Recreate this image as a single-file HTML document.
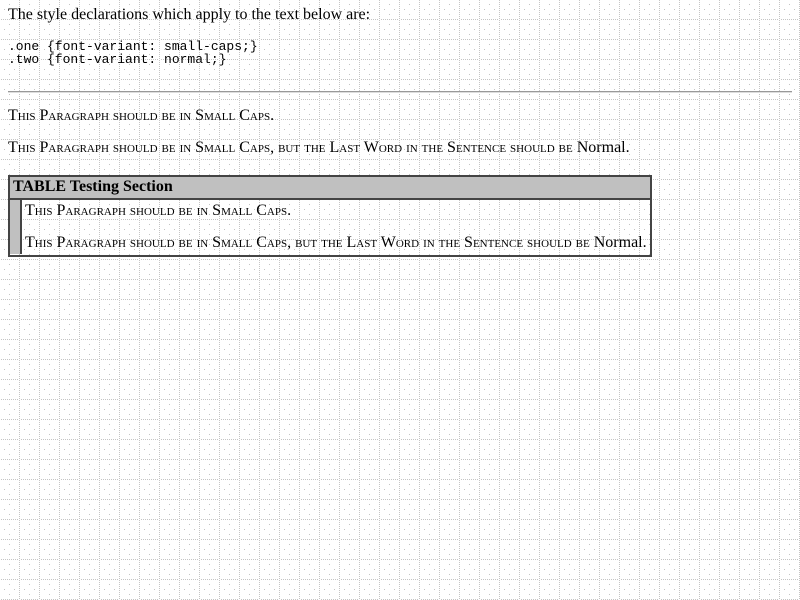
<!DOCTYPE html>
<html><head><style>
html,body{margin:0;padding:0;width:800px;height:600px;overflow:hidden;background:#fff;}
#bg{position:absolute;left:0;top:0;}
.t{position:absolute;font-family:"Liberation Serif",serif;font-size:16px;color:#000;white-space:nowrap;line-height:16px;}
.sc{font-variant:small-caps;}
pre{position:absolute;margin:0;font-family:"Liberation Mono",monospace;font-size:13px;line-height:13px;left:8px;top:40px;}
</style></head><body>
<svg id="bg" width="800" height="600">
<defs><pattern id="p" width="20" height="20" patternUnits="userSpaceOnUse">
<g fill="#c4c4c4">
<rect x="19" y="0" width="1" height="1"/><rect x="19" y="2" width="1" height="1"/><rect x="19" y="4" width="1" height="1"/><rect x="19" y="6" width="1" height="1"/><rect x="19" y="8" width="1" height="1"/><rect x="19" y="10" width="1" height="1"/><rect x="19" y="12" width="1" height="1"/><rect x="19" y="14" width="1" height="1"/><rect x="19" y="16" width="1" height="1"/><rect x="19" y="18" width="1" height="1"/>
<rect y="19" x="1" width="1" height="1"/><rect y="19" x="3" width="1" height="1"/><rect y="19" x="5" width="1" height="1"/><rect y="19" x="7" width="1" height="1"/><rect y="19" x="9" width="1" height="1"/><rect y="19" x="11" width="1" height="1"/><rect y="19" x="13" width="1" height="1"/><rect y="19" x="15" width="1" height="1"/><rect y="19" x="17" width="1" height="1"/>
<rect x="9" y="4" width="1" height="1"/><rect x="9" y="14" width="1" height="1"/><rect x="4" y="9" width="1" height="1"/><rect x="14" y="9" width="1" height="1"/>
</g></pattern></defs>
<rect width="800" height="600" fill="url(#p)"/>
</svg>
<div class="t" style="left:8px;top:7px">The style declarations which apply to the text below are:</div>
<pre>.one {font-variant: small-caps;}
.two {font-variant: normal;}</pre>
<div style="position:absolute;left:8px;top:91px;width:784px;height:1px;background:#999;border-bottom:1px solid #ddd"></div>
<div class="t sc" style="left:8px;top:108px">This Paragraph should be in Small Caps.</div>
<div class="t sc" style="left:8px;top:140px">This Paragraph should be in Small Caps, but the Last Word in the Sentence should be <span style="font-variant:normal">Normal</span>.</div>
<div style="position:absolute;left:8px;top:175px;width:640px;height:78px;border:2px solid #444;"></div>
<div style="position:absolute;left:10px;top:177px;width:640px;height:21px;background:#c0c0c0;border-bottom:2px solid #444"></div>
<div style="position:absolute;left:10px;top:200px;width:10px;height:54px;background:#c0c0c0;border-right:2px solid #444"></div>
<div class="t" style="left:13px;top:179px;font-weight:bold">TABLE Testing Section</div>
<div class="t sc" style="left:25px;top:203px">This Paragraph should be in Small Caps.</div>
<div class="t sc" style="left:25px;top:235px">This Paragraph should be in Small Caps, but the Last Word in the Sentence should be <span style="font-variant:normal">Normal</span>.</div>
</body></html>
